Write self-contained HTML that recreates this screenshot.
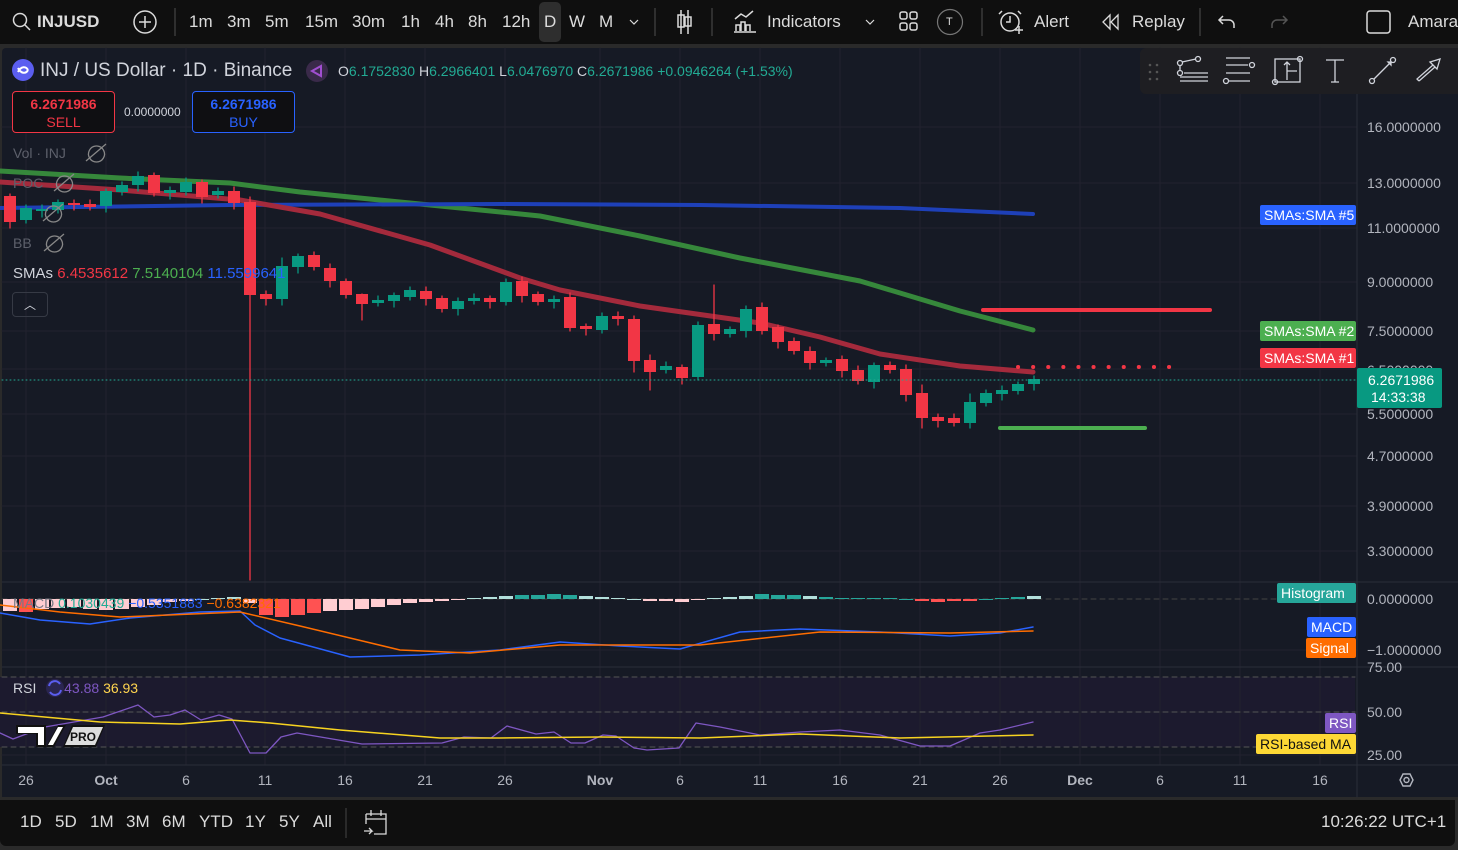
<!DOCTYPE html>
<html><head><meta charset="utf-8">
<style>
*{margin:0;padding:0;box-sizing:border-box}
body{width:1458px;height:850px;background:#2a2a2a;overflow:hidden;font-family:"Liberation Sans","DejaVu Sans",sans-serif;position:relative}
#top{position:absolute;left:0;top:0;width:1458px;height:44px;background:#0f0f0f;color:#dbdbdb;font-size:17px}
#top span{position:absolute;top:12px}
#main{position:absolute;left:2px;top:48px;width:1456px;height:749px;background:#161a25;border-radius:4px 0 0 0}
#bot{position:absolute;left:0;top:800px;width:1455px;height:46px;background:#0f0f0f;color:#dbdbdb;font-size:17px;border-radius:0 0 6px 6px}
#bot span{position:absolute;top:12px}
.t{position:absolute;white-space:nowrap}
svg{position:absolute;left:0;top:0}
</style></head><body>
<div id="top">
<svg width="1458" height="44" fill="none" stroke="#dbdbdb" stroke-width="1.5">
<circle cx="20" cy="20" r="6.5"/><path d="M25 25l5 5"/>
<circle cx="145" cy="22" r="11"/><path d="M145 16v12M139 22h12"/>
<path d="M175 8v28M655 8v28M712 8v28M982 8v28M1200 8v28" stroke="#3a3a3a"/>
<path d="M630 20l4 4 4-4" stroke-width="1.2"/>
<path d="M681 10v24M688 10v24M678 15h6v12h-6zM685 17h6v9h-6z"/>
<path d="M734 32h22M736 31v-6h4v6M741 31v-9h4v9M746 31v-6h4v6M735 19l6-5 5 3 7-6"/>
<path d="M866 20l4 4 4-4" stroke-width="1.2"/>
<rect x="900" y="12" width="7" height="7" rx="2"/><rect x="910" y="12" width="7" height="7" rx="2"/><rect x="900" y="23" width="7" height="7" rx="2"/><rect x="910" y="23" width="7" height="7" rx="2"/>
<circle cx="950" cy="22" r="12.5" stroke="#777" stroke-width="1.2"/>
<circle cx="1010" cy="22" r="9"/><path d="M1010 16v6h-4M1002 11l-3 3M1018 11l3 3M1015 30h8M1019 26v8"/>
<path d="M1110 15l-7 7 7 7zM1118 15l-7 7 7 7z" stroke-width="1.3"/>
<path d="M1223 16l-4 4 4 4M1219 20h10a5 5 0 0 1 5 5v3"/>
<path d="M1283 16l4 4-4 4M1287 20h-10a5 5 0 0 0-5 5v3" stroke="#555"/>
<rect x="1367" y="11" width="23" height="22" rx="3"/>
</svg>
<span style="left:37px;font-weight:bold">INJUSD</span>
<span style="left:189px">1m</span><span style="left:227px">3m</span><span style="left:265px">5m</span><span style="left:305px">15m</span><span style="left:352px">30m</span><span style="left:401px">1h</span><span style="left:435px">4h</span><span style="left:468px">8h</span><span style="left:502px">12h</span>
<div style="position:absolute;left:539px;top:2px;width:22px;height:40px;background:#2e2e2e;border-radius:5px"></div>
<span style="left:544px">D</span><span style="left:569px">W</span><span style="left:599px">M</span>
<span style="left:767px">Indicators</span><span style="left:946px;font-size:11px;top:16px">T</span>
<span style="left:1034px">Alert</span><span style="left:1132px">Replay</span><span style="left:1408px">Amara</span>
</div>
<div id="main"></div>
<svg id="ch" width="1458" height="850"></svg>
<div class="t" style="left:40px;top:60px;color:#d1d4dc;font-size:19px">INJ / US Dollar · 1D · Binance</div>
<div class="t" style="left:338px;top:63px;font-size:14px;color:#d1d4dc">O<span style="color:#22ab94">6.1752830</span> H<span style="color:#22ab94">6.2966401</span> L<span style="color:#22ab94">6.0476970</span> C<span style="color:#22ab94">6.2671986 +0.0946264 (+1.53%)</span></div>
<div class="t" style="left:12px;top:91px;width:103px;height:42px;border:1px solid #f23645;border-radius:4px;background:#0f0f12;text-align:center;color:#f23645;font-size:14px;line-height:18px;padding-top:3px"><b>6.2671986</b><br>SELL</div>
<div class="t" style="left:124px;top:105px;color:#d1d4dc;font-size:12px">0.0000000</div>
<div class="t" style="left:192px;top:91px;width:103px;height:42px;border:1px solid #2962ff;border-radius:4px;background:#0f0f12;text-align:center;color:#2962ff;font-size:14px;line-height:18px;padding-top:3px"><b>6.2671986</b><br>BUY</div>
<div class="t" style="left:13px;top:145px;color:#5d606b;font-size:14px">Vol · INJ</div>
<div class="t" style="left:13px;top:175px;color:#5d606b;font-size:14px">POC</div>
<div class="t" style="left:13px;top:235px;color:#5d606b;font-size:14px">BB</div>
<div class="t" style="left:13px;top:265px;color:#d1d4dc;font-size:15px">SMAs <span style="color:#f23645">6.4535612</span> <span style="color:#4caf50">7.5140104</span> <span style="color:#2962ff">11.5599641</span></div>
<div class="t" style="left:12px;top:292px;width:36px;height:25px;border:1px solid #363a45;border-radius:4px;color:#d1d4dc;font-size:12px;text-align:center;line-height:24px">︿</div>
<div class="t" style="left:13px;top:595px;color:#787b86;font-size:14px">MACD <span style="color:#22ab94">0.1030439</span> <span style="color:#2962ff">−0.5351883</span> <span style="color:#ff6d00">−0.6382321</span></div>
<div class="t" style="left:13px;top:680px;color:#d1d4dc;font-size:14px">RSI <span style="display:inline-block;width:20px"></span> <span style="color:#7e57c2">43.88</span> <span style="color:#ffd54f">36.93</span></div>
<div class="t" style="left:1140px;top:48px;width:318px;height:46px;background:#1e1e22;border-radius:6px 0 0 6px"></div>
<svg width="1458" height="850" fill="none" stroke="#d1d4dc" stroke-width="1.3">
<g fill="#555" stroke="none"><circle cx="1150" cy="65" r="1.3"/><circle cx="1157" cy="65" r="1.3"/><circle cx="1150" cy="72" r="1.3"/><circle cx="1157" cy="72" r="1.3"/><circle cx="1150" cy="79" r="1.3"/><circle cx="1157" cy="79" r="1.3"/></g>
<circle cx="1180" cy="63" r="2.5"/><circle cx="1198" cy="59" r="2.5"/><circle cx="1180" cy="73" r="2.5"/><path d="M1182 62l14-3M1180 66v4M1184 73h24M1180 77h28M1180 81h28"/>
<path d="M1226 58h24M1226 65h22M1228 81h22M1226 73h24"/><circle cx="1252" cy="65" r="2.5"/><circle cx="1226" cy="81" r="2.5"/>
<rect x="1275" y="59" width="25" height="23"/><circle cx="1300" cy="59" r="2.5"/><circle cx="1275" cy="82" r="2.5"/><path d="M1287 62v18M1287 71h10M1284 65l3-3 3 3"/>
<path d="M1326 60h18M1335 60v22M1331 82h8"/>
<circle cx="1372" cy="81" r="2.5"/><circle cx="1393" cy="60" r="2.5"/><path d="M1374 79l17-17"/><path d="M1388 62l3 0 0 3z" fill="#d1d4dc"/>
<path d="M1419 81l16-14M1419 81l-2-2 16-14M1430 62l10-3-3 10z"/>
<path d="M96 146a8 8 0 1 0 1 0zM86 161l20-17M64 176a8 8 0 1 0 1 0zM54 191l20-17M53 206a8 8 0 1 0 1 0zM43 221l20-17M54 236a8 8 0 1 0 1 0zM44 251l20-17" stroke="#888"/>
</svg>
<div id="bot">
<span style="left:20px">1D</span><span style="left:55px">5D</span><span style="left:90px">1M</span><span style="left:126px">3M</span><span style="left:162px">6M</span><span style="left:199px">YTD</span><span style="left:245px">1Y</span><span style="left:279px">5Y</span><span style="left:313px">All</span>
<svg width="400" height="46" fill="none" stroke="#dbdbdb" stroke-width="1.3"><path d="M346 8v30" stroke="#3a3a3a"/><path d="M366 14h20v20h-12M366 14v10M366 19h20M371 10v6M381 10v6M364 31h8l-3-3M372 31l-3 3"/></svg>
<span style="left:1321px">10:26:22 UTC+1</span>
</div>
<script>
var s=document.getElementById('ch'),h='';
function R(x,y,w,hh,c,e){h+='<rect x="'+x+'" y="'+y+'" width="'+w+'" height="'+hh+'" fill="'+c+'" '+(e||'')+'/>';}
function L(d,c,w,e){h+='<path d="'+d+'" stroke="'+c+'" stroke-width="'+w+'" fill="none" stroke-linecap="round" stroke-linejoin="round" '+(e||'')+'/>';}
function T(x,y,t,c,sz,a){h+='<text x="'+x+'" y="'+y+'" fill="'+c+'" font-size="'+(sz||14)+'" font-family="Liberation Sans,sans-serif" '+(a||'')+'>'+t+'</text>';}
var G='#22222e';
R(0,677,1355,70,'#1c1a2e');
[26,106,186,265,345,425,505,600,680,760,840,920,1000,1080,1160,1240,1320].forEach(function(x){L('M'+x+' 48V765',G,1)});
[127,183,228,282,331,369,414,456,506,551,650,712,755].forEach(function(y){L('M2 '+y+'H1357',G,1)});
L('M2 582H1458','#2a2e39',1);L('M2 667H1458','#2a2e39',1);L('M2 765H1458','#2a2e39',1);L('M1357 48V797','#2a2e39',1);
[677,712,747].forEach(function(y){L('M2 '+y+'H1355','#555',1,'stroke-dasharray="5 4"')});
L('M2 599H1355','#444',1,'stroke-dasharray="5 4"');
L('M0 171L120 178L230 183L300 192L420 204L540 216L640 236L740 258L860 281L960 311L1033 330','#388e3c',5,'opacity=".95"');
L('M0 208L230 205L500 204L700 205L900 208L1033 214','#1e40b8',4);
L('M0 182L120 190L240 200L320 214L430 245L520 278L560 290L640 306L760 323L820 337L880 354L960 366L1033 372','#a42a3c',5);
var d=[[196,222,0],[208,220,1],[209,211,1],[202,210,1],[203,204,0],[204,207,0],[191,206,1],[185,192,1],[176,185,1],[175,193,0],[190,193,1],[182,192,1],[182,197,0],[191,195,1],[191,203,0],[202,295,0],[294,299,0],[266,299,1],[256,267,1],[255,267,0],[268,281,0],[281,295,0],[294,304,0],[300,303,1],[295,301,1],[290,297,1],[291,299,0],[298,309,0],[301,309,1],[298,301,1],[298,302,0],[282,302,1],[281,296,0],[294,302,0],[299,302,1],[297,328,0],[326,329,0],[316,330,1],[316,319,0],[319,361,0],[360,372,0],[366,370,1],[367,378,0],[325,377,1],[324,334,0],[329,334,1],[309,331,1],[307,331,0],[327,342,0],[341,351,0],[351,363,0],[360,363,1],[359,371,0],[370,381,0],[365,382,1],[365,370,0],[369,395,0],[393,418,0],[417,421,0],[418,423,0],[402,423,1],[393,403,1],[390,394,1],[384,391,1],[379,384,1]];
var wk={15:[197,580],44:[285,340],22:[294,320],39:[316,372],57:[385,428],60:[394,428],40:[355,390],17:[258,305]};
d.forEach(function(c,i){var x=10+16*i,col=c[2]?'#089981':'#f23645',w=wk[i]||[c[0]-(i%3+2),c[1]+(i%2?3:6)];
L('M'+x+' '+w[0]+'V'+w[1],col,1.3);R(x-6,c[0],12,Math.max(2,c[1]-c[0]),col);});
L('M983 310H1210','#f23645',4);L('M1000 428H1145','#4caf50',4);
L('M1018 367H1172','#f23645',4,'stroke-dasharray="0.1 15"');
L('M2 380H1357','#22ab94',1,'stroke-dasharray="1 3"');
for(var i=0;i<65;i++){var x=10+16*i;
var hv=[-12,-13,-10,-9,-8,-10,-11,-10,-8,-6,-3,-2,0,1,2,-4,-16,-18,-16,-14,-12,-11,-10,-8,-6,-4,-3,-2,-1,1,2,3,4,4,5,4,3,2,1,0,-2,-2,-3,-1,1,2,3,5,4,4,3,2,1,1,1,1,0,-2,-3,-2,-2,0,1,2,3][i];
var col=hv>=0?(i>30&&i<50&&hv>=4?'#26a69a':(i>45&&hv<3?'#26a69a':'#b2dfdb')):(hv<-12||(i>=57&&i<=60)?'#ff5252':'#ffcdd2');
if(hv>=0)R(x-7,599-hv,14,Math.max(hv,1),col);else R(x-7,599,14,-hv,col);}
L('M0 613L40 620L90 624L130 618L200 612L240 611L255 625L280 638L350 657L420 655L500 650L560 642L620 646L680 649L740 632L800 629L880 632L950 636L1000 633L1033 627','#2962ff',1.5);
L('M0 605L60 612L120 617L240 612L300 626L400 650L470 653L560 645L700 645L820 632L950 633L1033 631','#ff6d00',1.5);
L('M0 733L13 739L45 727L103 717L138 705L154 717L170 715L185 710L201 720L219 715L232 719L250 753L266 753L281 737L297 733L362 744L442 743L464 737L491 738L507 726L536 734L554 732L571 743L585 743L603 735L616 736L634 748L647 750L679 748L696 723L720 727L760 735L800 732L840 730L880 735L920 746L950 746L980 733L1000 730L1033 722','#7e57c2',1.3);
L('M0 713L100 722L180 724L230 720L270 723L340 730L440 738L500 738L600 737L700 738L800 734L900 738L1033 735','#f7d320',1.5);
h+='<path d="M16 725h30v22h-10v-13h-20zM46 747l12-22h8l-12 22z" fill="#111"/><path d="M18 727h26v18h-6v-12h-20zM48 745l10-18h5l-10 18z" fill="#fff"/><path d="M63 747l9-22h33l-9 22z" fill="#111"/><path d="M65 745l8-18h30l-8 18z" fill="#ddd"/>';
T(70,741,'PRO','#111',12,'font-weight="bold"');
[[127,'16.0000000'],[183,'13.0000000'],[228,'11.0000000'],[282,'9.0000000'],[331,'7.5000000'],[370,'6.5000000'],[414,'5.5000000'],[456,'4.7000000'],[506,'3.9000000'],[551,'3.3000000'],[599,'0.0000000'],[650,'−1.0000000'],[667,'75.00'],[712,'50.00'],[755,'25.00']].forEach(function(a){T(1367,a[0]+5,a[1],'#b2b5be',14)});
function tag(x,y,w,t,bg,fc){R(x,y-10,w,20,bg,'rx="2"');T(x+4,y+5,t,fc||'#fff',14);}
tag(1260,215,96,'SMAs:SMA #5','#2962ff');tag(1260,331,96,'SMAs:SMA #2','#4caf50');tag(1260,358,96,'SMAs:SMA #1','#f23645');
tag(1277,593,79,'Histogram','#26a69a');tag(1307,627,49,'MACD','#2962ff');tag(1306,648,50,'Signal','#ff6d00');
tag(1325,723,31,'RSI','#7e57c2');tag(1256,744,100,'RSI-based MA','#fdd835','#111');
R(1357,368,85,40,'#089981','rx="2"');T(1368,385,'6.2671986','#fff',14);T(1371,402,'14:33:38','#fff',14);
[[26,'26'],[106,'Oct'],[186,'6'],[265,'11'],[345,'16'],[425,'21'],[505,'26'],[600,'Nov'],[680,'6'],[760,'11'],[840,'16'],[920,'21'],[1000,'26'],[1080,'Dec'],[1160,'6'],[1240,'11'],[1320,'16']].forEach(function(a){T(a[0],785,a[1],'#b2b5be',14,'text-anchor="middle"'+((a[1]=='Oct'||a[1]=='Nov'||a[1]=='Dec')?' font-weight="bold"':''))});
h+='<path d="M1400 780l3-6h7l3 6-3 6h-7z" fill="none" stroke="#b2b5be" stroke-width="1.4"/><circle cx="1406.5" cy="780" r="2.5" fill="none" stroke="#b2b5be" stroke-width="1.4"/>';
h+='<circle cx="55" cy="688" r="9" fill="#2a2550"/><path d="M49 686a6 6 0 0 1 11-2M61 690a6 6 0 0 1-11 2" stroke="#5b5ef0" stroke-width="2" fill="none"/>';
h+='<circle cx="23" cy="70" r="11" fill="#5b5ef0"/><path d="M18 72c3-6 8-6 10-2M18 68c3 6 8 6 10 2" stroke="#fff" stroke-width="2" fill="none"/>';
h+='<circle cx="317" cy="71" r="11" fill="#3a2a4a"/><path d="M312 71l9-5v10z" stroke="#a04fd0" stroke-width="2" fill="none"/>';
s.innerHTML=h;
</script>
</body></html>
